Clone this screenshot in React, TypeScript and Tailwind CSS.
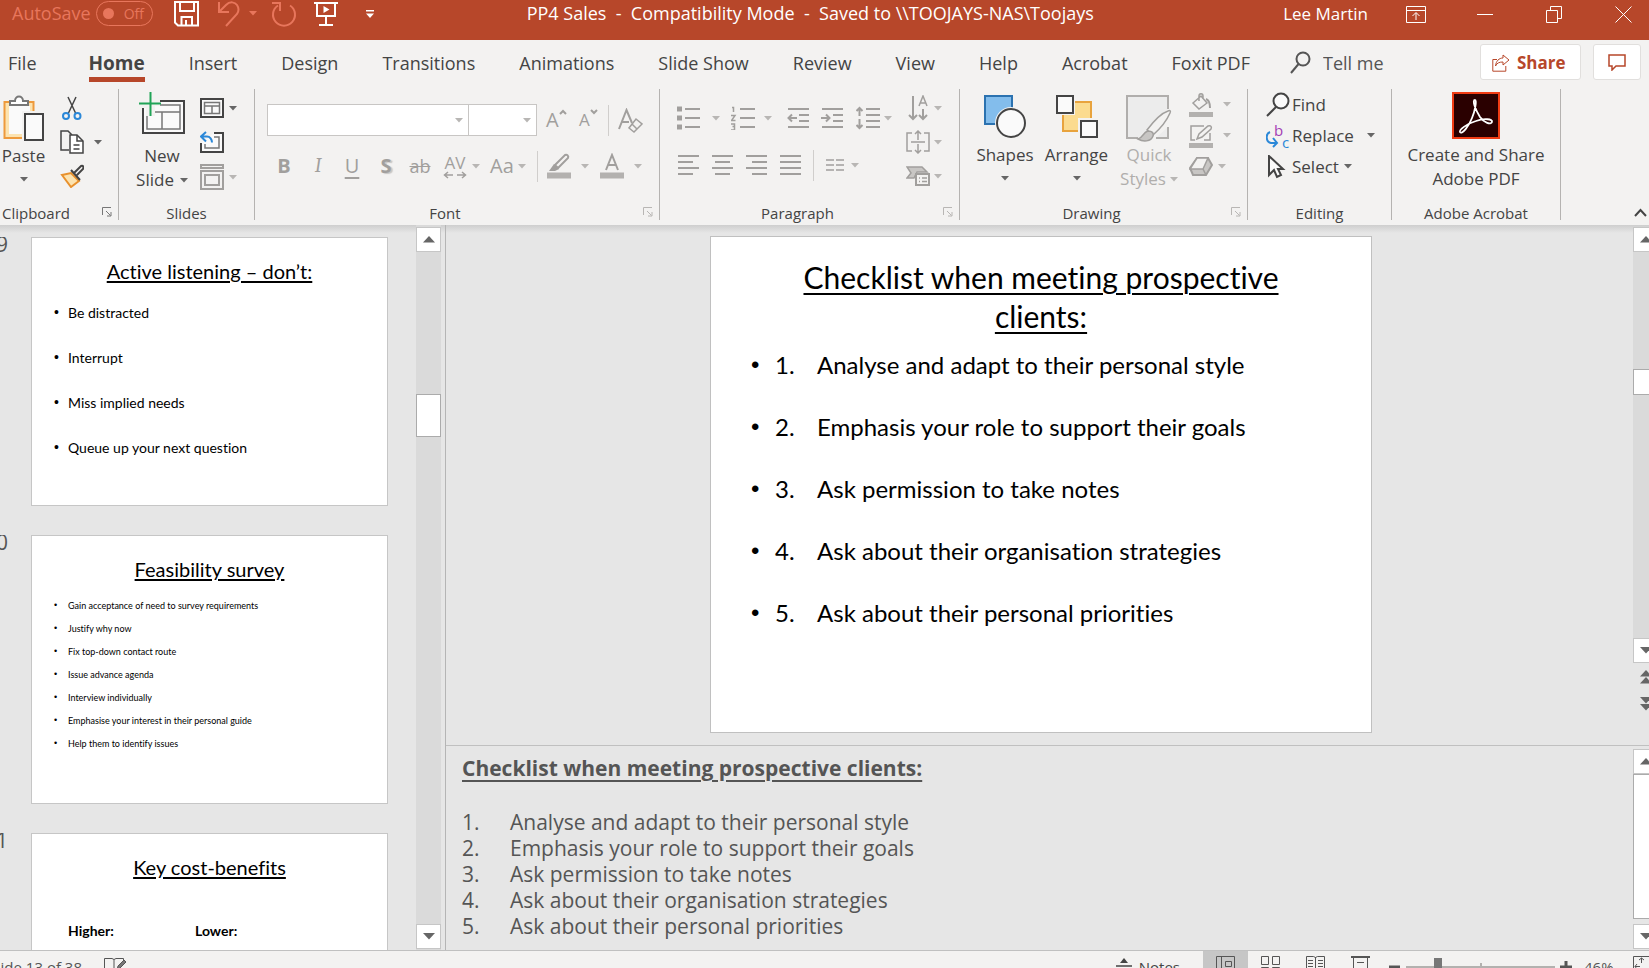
import { useState } from 'react';
import type { ReactNode } from 'react';

const TABS = [
  'File', 'Home', 'Insert', 'Design', 'Transitions', 'Animations',
  'Slide Show', 'Review', 'View', 'Help', 'Acrobat', 'Foxit PDF',
];

const CHECKLIST = [
  'Analyse and adapt to their personal style',
  'Emphasis your role to support their goals',
  'Ask permission to take notes',
  'Ask about their organisation strategies',
  'Ask about their personal priorities',
];

const LISTENING = ['Be distracted', 'Interrupt', 'Miss implied needs', 'Queue up your next question'];

const SURVEY = [
  'Gain acceptance of need to survey requirements',
  'Justify why now',
  'Fix top-down contact route',
  'Issue advance agenda',
  'Interview individually',
  'Emphasise your interest in their personal guide',
  'Help them to identify issues',
];

type IconProps = {
  w?: number;
  h?: number;
  sw?: number;
  className?: string;
  children: ReactNode;
};

// Plain stroke icon, drawn 1:1 in pixels
function Icon({ w = 24, h = 24, sw = 2, className = '', children }: IconProps) {
  return (
    <svg
      width={w}
      height={h}
      viewBox={`0 0 ${w} ${h}`}
      fill="none"
      stroke="currentColor"
      strokeWidth={sw}
      className={`shrink-0 ${className}`}
      aria-hidden="true"
    >
      {children}
    </svg>
  );
}

function Caret({ className = 'text-[#666]' }: { className?: string }) {
  return (
    <svg width="8" height="5" viewBox="0 0 8 5" className={`shrink-0 ${className}`} aria-hidden="true">
      <path d="M0 0h8L4 4.5z" fill="currentColor" />
    </svg>
  );
}

function Launcher({ className = 'text-[#777]' }: { className?: string }) {
  return (
    <button aria-label="More options" className={`mt-[5px] mr-[6px] ${className}`}>
      <Icon w={10} h={10} sw={1}>
        <path d="M.5 8V.5H9M4 4l4.500 4.500M9 5v4H5" />
      </Icon>
    </button>
  );
}

type GroupProps = {
  label: string;
  className: string;
  launcher?: ReactNode;
  children: ReactNode;
};

function Group({ label, className, launcher, children }: GroupProps) {
  return (
    <section aria-label={label} className={`flex h-[131px] shrink-0 flex-col border-r border-[#b5b3b1] ${className}`}>
      <div className="flex h-[113px] shrink-0 items-start">{children}</div>
      <div className="flex h-[22px] shrink-0 items-start">
        <div className="flex-1 text-center text-[15px] leading-[22px]">{label}</div>
        {launcher}
      </div>
    </section>
  );
}

function Divider() {
  return <div className="h-[31px] w-px shrink-0 bg-[#d0cecc]" />;
}

function TitleBar() {
  return (
    <header className="flex h-10 shrink-0 items-start bg-[#b7472a] text-white">
      <div className="flex h-[27px] shrink-0 items-center pl-3">
        <label htmlFor="autosave" className="text-[18px] text-[#e8765c]">AutoSave</label>
        <button
          id="autosave"
          role="switch"
          aria-checked="false"
          className="ml-[5px] flex h-[25px] w-[57px] items-center gap-[10px] rounded-full border border-[#e8765c] pl-[6px] text-[14px] text-[#e8765c]"
        >
          <span className="size-[11px] rounded-full bg-[#e8765c]" />
          Off
        </button>
        <button aria-label="Save" className="ml-[21px]">
          <Icon w={25} h={26}>
            <path d="M1 1h23v23.500H4L1 21.500zM6 1v9h14V1M7.500 24v-8H18v8M12 19v5" />
          </Icon>
        </button>
        <button aria-label="Undo" className="ml-[18px] text-[#e8765c]">
          <Icon w={24} h={26}>
            <path d="M2 1v10h10M2 11L9 4c4-4 9-3 11 0s2 6 0 9L9 25" />
          </Icon>
        </button>
        <Caret className="ml-[8px] text-[#e8765c]" />
        <button aria-label="Redo" className="ml-[14px] text-[#e8765c]">
          <Icon w={26} h={26}>
            <path d="M7 4.500A11 11 0 1 0 19 4.500M1 2h8v8" />
          </Icon>
        </button>
        <button aria-label="Start from beginning" className="ml-[17px]">
          <Icon w={24} h={26}>
            <path d="M0 2h24M3 2v13h18V2M12 15v8M5 24h14" />
            <path d="M9.500 5v7l6-3.500z" fill="currentColor" stroke="none" />
          </Icon>
        </button>
        <button aria-label="Customize quick access" className="ml-[28px]">
          <svg width="8" height="8" viewBox="0 0 8 8" aria-hidden="true">
            <path d="M0 0h8v1.500H0zM0 3.500h8L4 8z" fill="currentColor" />
          </svg>
        </button>
      </div>
      <div className="flex-1 whitespace-pre pl-[153px] text-[18px] leading-[26px]">
        {'PP4 Sales  -  Compatibility Mode  -  Saved to \\\\TOOJAYS-NAS\\Toojays'}
      </div>
      <div className="flex h-[28px] shrink-0 items-center pr-[17px]">
        <span className="text-[17px]">Lee Martin</span>
        <button aria-label="Ribbon display options" className="ml-[38px]">
          <Icon w={20} h={17} sw={1}>
            <path d="M.5 .5h19v16H.5zM.5 4.500h19M10 14V7M6.500 10L10 6.500 13.500 10" />
          </Icon>
        </button>
        <button aria-label="Minimize" className="ml-[51px]">
          <Icon w={16} h={16} sw={1}><path d="M0 8.500h16" /></Icon>
        </button>
        <button aria-label="Restore" className="ml-[53px]">
          <Icon w={16} h={17} sw={1}>
            <path d="M.5 4.500h11v12H.5zM4.500 4V.5h11v12H12" />
          </Icon>
        </button>
        <button aria-label="Close" className="ml-[53px]">
          <Icon w={17} h={17} sw={1}><path d="M.5 .5l16 16M16.500 .5l-16 16" /></Icon>
        </button>
      </div>
    </header>
  );
}

function TabRow() {
  const [active, setActive] = useState('Home');

  return (
    <nav className="flex h-[49px] shrink-0 items-start bg-[#f3f2f1] pr-[8px]">
      <div className="flex w-[1250px] shrink-0 justify-between pl-2 pt-[9px]">
        {TABS.map(tab => (
          <button
            key={tab}
            onClick={() => setActive(tab)}
            className={
              tab === active
                ? 'ml-2 h-[33px] border-b-[5px] border-[#b7472a] text-[19px] leading-[28px] font-bold'
                : 'h-[33px] border-b-[5px] border-transparent text-[18px] leading-[28px]'
            }
          >
            {tab}
          </button>
        ))}
      </div>
      <label className="ml-[40px] flex flex-1 items-center pt-[11px]">
        <Icon w={21} h={24} sw={2} className="text-[#555]">
          <circle cx="13" cy="8" r="6.500" />
          <path d="M8.500 13L1 22" />
        </Icon>
        <input
          aria-label="Tell me"
          placeholder="Tell me"
          className="ml-[12px] h-6 w-[100px] bg-transparent text-[18px] outline-none placeholder:text-[#555]"
        />
      </label>
      <button className="mt-1 flex h-9 w-[101px] items-center gap-[7px] rounded-[3px] border border-[#e1dfdd] bg-white pl-[11px] pt-[2px] text-[17px] font-bold text-[#b7472a]">
        <Icon w={18} h={18} sw={1}>
          <path d="M5 5.500H.8v11.700h13V12" />
          <path d="M11 1l6 5-6 5V8c-4 0-6 1-7.500 4C4 7 7 4 11 4z" />
        </Icon>
        Share
      </button>
      <button aria-label="Comments" className="ml-3 mt-1 flex h-9 w-[48px] items-center justify-center rounded-[3px] border border-[#e1dfdd] bg-white text-[#b7472a]">
        <Icon w={18} h={17}>
          <path d="M1 1h16v11H8l-4 4v-4H1z" strokeWidth="1.500" />
        </Icon>
      </button>
    </nav>
  );
}

function ClipboardGroup() {
  return (
    <Group label="Clipboard" className="w-[119px]" launcher={<div className="flex w-[46px] justify-end"><Launcher /></div>}>
      <button className="flex w-[47px] shrink-0 flex-col items-center pt-[6px] text-[17px] leading-6">
        <Icon w={42} h={46}>
          <rect x="1.500" y="7" width="29" height="36" fill="#fce3b0" stroke="#ee9a3c" />
          <rect x="6" y="11" width="21" height="28" fill="#fafafa" stroke="none" />
          <path d="M7 10V6h5c0-6 8-6 8 0h5v4z" fill="#fff" stroke="#777" />
          <rect x="19" y="16" width="23" height="30" fill="#f3f2f1" stroke="none" />
          <rect x="22" y="19" width="18" height="26" fill="#fafafa" stroke="#444" />
        </Icon>
        <span className="mt-[3px]">Paste</span>
        <Caret className="mt-[9px] text-[#666]" />
      </button>
      <div className="flex shrink-0 flex-col pl-[13px] pt-[2px]">
        <button aria-label="Cut" className="flex h-[34px] items-center">
          <Icon>
            <path d="M8 1l8 17M16 1L8 18" stroke="#444" strokeWidth="1.500" />
            <circle cx="6" cy="20" r="3" stroke="#2b88d8" />
            <circle cx="17.500" cy="20" r="3" stroke="#2b88d8" />
          </Icon>
        </button>
        <button aria-label="Copy" className="flex h-[34px] items-center gap-[10px]">
          <Icon>
            <path d="M9 20H1V1h7l4 4" stroke="#444" strokeWidth="1.500" />
            <path d="M10 5h7l6 6v12H10z" fill="#fff" stroke="#444" strokeWidth="1.500" />
            <path d="M17 5v6h6M13.500 15h6M13.500 19h6" stroke="#444" strokeWidth="1.500" />
          </Icon>
          <Caret />
        </button>
        <button aria-label="Format Painter" className="flex h-[34px] items-center">
          <Icon>
            <path d="M2 11l9-2 8 8-8 6z" fill="#fce3b0" stroke="#e8912d" />
            <path d="M11 6l9 10M14 9l7-7c2-1 3 1 2 3l-6 6" stroke="#444" />
          </Icon>
        </button>
      </div>
    </Group>
  );
}

function SlidesGroup() {
  return (
    <Group label="Slides" className="w-[136px]">
      <button className="flex w-[66px] shrink-0 flex-col items-center pt-[3px] pl-5 text-[17px] leading-6">
        <Icon w={46} h={42}>
          <rect x="4" y="9" width="41" height="32" fill="#fafafa" stroke="#444" />
          <rect x="8" y="13" width="33" height="24" stroke="#777" strokeWidth="1.500" />
          <path d="M8 20h33M23 20v17" stroke="#777" strokeWidth="1.500" />
          <path d="M0 6h21v8H16v10H7V16H0z" fill="#f3f2f1" stroke="none" />
          <path d="M0 11.500h22M11.500 0v24" stroke="#20a357" />
        </Icon>
        <span className="mt-[10px]">New</span>
        <span className="flex items-center gap-[6px]">
          Slide
          <Caret />
        </span>
      </button>
      <div className="flex flex-col pl-[15px] pt-[2px]">
        <button aria-label="Layout" className="flex h-[34px] items-center gap-[5px]">
          <Icon w={24} h={20}>
            <rect x="1" y="1" width="22" height="18" fill="#fafafa" stroke="#444" />
            <path d="M4.500 4.500h15v11h-15zM4.500 8h15M12 8v8" stroke="#777" strokeWidth="1.500" />
          </Icon>
          <Caret />
        </button>
        <button aria-label="Reset" className="flex h-[34px] items-center">
          <Icon w={24} h={22}>
            <path d="M14 2h9v19H1v-9" fill="#fafafa" stroke="#444" />
            <path d="M14 6h5v11H5v-4" stroke="#777" strokeWidth="1.500" />
            <path d="M6 1L1 5.500l5 5M1 5.500h6c3 0 5 3 5 6" stroke="#2b88d8" />
          </Icon>
        </button>
        <button aria-label="Section" className="flex h-[36px] items-center gap-[5px] text-[#a19f9d]">
          <Icon w={24} h={26}>
            <path d="M1 1h22v3H1zM1 7h22v18H1zM5 11h14v10H5z" />
          </Icon>
          <Caret className="text-[#b8b6b4]" />
        </button>
      </div>
    </Group>
  );
}

function FontGroup() {
  return (
    <Group label="Font" className="w-[405px]" launcher={<Launcher className="ml-2 text-[#b8b6b4]" />}>
      <div className="flex flex-col pl-[12px] pt-[15px] text-[#a19f9d]">
        <div className="flex h-8 items-center">
          <div className="flex h-8 w-[202px] items-center border border-[#c8c6c4] bg-white pr-[5px]">
            <select aria-label="Font" disabled className="h-full flex-1 appearance-none bg-transparent"><option /></select>
            <Caret className="text-[#b8b6b4]" />
          </div>
          <div className="-ml-px flex h-8 w-[69px] items-center border border-[#c8c6c4] bg-white pr-[5px]">
            <select aria-label="Font size" disabled className="h-full flex-1 appearance-none bg-transparent"><option /></select>
            <Caret className="text-[#b8b6b4]" />
          </div>
          <button aria-label="Increase font size" className="ml-[9px] flex w-[33px] items-start">
            <span className="text-[20px] leading-6">A</span>
            <Icon w={8} h={8} sw={2}><path d="M1 6l3-3 3 3" /></Icon>
          </button>
          <button aria-label="Decrease font size" className="flex w-[29px] items-start">
            <span className="text-[17px] leading-6">A</span>
            <Icon w={8} h={8} sw={2}><path d="M1 2l3 3 3-3" /></Icon>
          </button>
          <Divider />
          <button aria-label="Clear formatting" className="ml-[9px]">
            <Icon w={25} h={25}>
              <path d="M1 21L8.500 2 14 15M4 14h7" />
              <path d="M18 11l6 5-8 8-5-4z" strokeWidth="1.500" />
              <path d="M14 16l5 5" strokeWidth="1.500" />
            </Icon>
          </button>
        </div>
        <div className="mt-[14px] flex h-8 items-center text-[20px]">
          <button className="w-[34px] font-bold">B</button>
          <button className="w-[34px] font-serif italic">I</button>
          <button className="w-[34px] underline underline-offset-4">U</button>
          <button className="w-[34px] font-bold text-shadow-[2px_1px_1px_#c8c6c4]">S</button>
          <button className="w-[34px] text-[18px] line-through">ab</button>
          <button aria-label="Character spacing" className="flex w-[49px] items-center gap-[5px] pl-[6px]">
            <span className="flex flex-col items-center">
              <span className="text-[17px] leading-[17px]">AV</span>
              <Icon w={24} h={8} sw={2}><path d="M10 4H1M5 1L1.500 4 5 7M14 4h9M19 1l3.500 3L19 7" strokeWidth="1.500" /></Icon>
            </span>
            <Caret className="text-[#b8b6b4]" />
          </button>
          <button aria-label="Change case" className="flex w-[51px] items-center gap-[4px] pl-1">
            Aa
            <Caret className="text-[#b8b6b4]" />
          </button>
          <Divider />
          <button aria-label="Highlight" className="ml-[9px] flex items-center gap-[10px]">
            <Icon w={24} h={26}>
              <path d="M8 12L18 2c2-1 4 1 3 3L11 15z" />
              <path d="M7 11l5 5-4 2H2z" fill="currentColor" stroke="none" />
              <path d="M0 22.500h24" strokeWidth="6" stroke="#b3b1af" />
            </Icon>
            <Caret className="text-[#b8b6b4]" />
          </button>
          <button aria-label="Font color" className="ml-[11px] flex items-center gap-[10px]">
            <Icon w={24} h={26}>
              <path d="M6 17l6-15 6 15M8 12h8" />
              <path d="M0 22.500h24" strokeWidth="6" stroke="#b3b1af" />
            </Icon>
            <Caret className="text-[#b8b6b4]" />
          </button>
        </div>
      </div>
    </Group>
  );
}

function ParagraphGroup() {
  return (
    <Group label="Paragraph" className="w-[300px]" launcher={<Launcher className="ml-2 text-[#b8b6b4]" />}>
      <div className="flex w-[246px] shrink-0 flex-col pl-[17px] pt-[13px] text-[#a19f9d]">
        <div className="flex h-8 items-center">
          <button aria-label="Bullets" className="flex items-center gap-[11px]">
            <Icon>
              <path d="M8 3h15M8 12h15M8 21h15" />
              <path d="M0 3h5M0 12h5M0 21h5" strokeWidth="5" />
            </Icon>
            <Caret className="text-[#b8b6b4]" />
          </button>
          <button aria-label="Numbering" className="ml-[11px] flex items-center gap-[9px]">
            <Icon>
              <path d="M9 3h15M9 12h15M9 21h15" />
              <path d="M1 1.500h1.500V6M0 9.500h4L.5 14.500H4.500M0 18h3.500v2.500H1.500M3.500 20.500V24H0" strokeWidth="1.500" />
            </Icon>
            <Caret className="text-[#b8b6b4]" />
          </button>
          <button aria-label="Decrease indent" className="ml-[15px]">
            <Icon w={22} h={22}>
              <path d="M1 2h21M12 8h10M12 14h10M1 20h21" />
              <path d="M10 11H1.500M5 7.500L1.500 11 5 14.500" />
            </Icon>
          </button>
          <button aria-label="Increase indent" className="ml-[12px]">
            <Icon w={22} h={22}>
              <path d="M1 2h21M12 8h10M12 14h10M1 20h21" />
              <path d="M0 11h8.500M5 7.500L8.500 11 5 14.500" />
            </Icon>
          </button>
          <button aria-label="Line spacing" className="ml-[13px] flex items-center gap-[4px]">
            <Icon>
              <path d="M10 3h14M10 9h14M10 15h14M10 21h14" />
              <path d="M3.500 10V2M.5 5l3-3 3 3M3.500 13v9M.5 19l3 3 3-3" />
            </Icon>
            <Caret className="text-[#b8b6b4]" />
          </button>
        </div>
        <div className="mt-[15px] flex h-8 items-center gap-[12px]">
          <button aria-label="Align left"><Icon w={22} h={20}><path d="M1 1h21M1 7h15M1 13h21M1 19h15" /></Icon></button>
          <button aria-label="Center"><Icon w={22} h={20}><path d="M1 1h21M4 7h15M1 13h21M4 19h15" /></Icon></button>
          <button aria-label="Align right"><Icon w={22} h={20}><path d="M1 1h21M7 7h15M1 13h21M7 19h15" /></Icon></button>
          <button aria-label="Justify"><Icon w={22} h={20}><path d="M1 1h21M1 7h21M1 13h21M1 19h21" /></Icon></button>
          <Divider />
          <button aria-label="Columns" className="flex items-center gap-[7px]">
            <Icon w={18} h={14}><path d="M0 2h8M0 7h8M0 12h8M10 2h8M10 7h8M10 12h8" strokeWidth="1.500" /></Icon>
            <Caret className="text-[#b8b6b4]" />
          </button>
        </div>
      </div>
      <div className="flex flex-col pt-[2px] text-[#a19f9d]">
        <button aria-label="Text direction" className="flex h-[34px] items-center gap-[4px]">
          <Icon w={24} h={26}>
            <path d="M7 1v23M3 20l4 4 4-4M17 14v10M13 20l4 4 4-4" />
            <path d="M13 11l4-10 4 10M14.500 8h5" strokeWidth="1.500" />
          </Icon>
          <Caret className="text-[#b8b6b4]" />
        </button>
        <button aria-label="Align text" className="flex h-[34px] items-center gap-[4px]">
          <Icon>
            <path d="M6 3H1v18h5M18 3h5v18h-5M5 12h14M12 10V1M9 4l3-3 3 3M12 14v9M9 20l3 3 3-3" strokeWidth="1.500" />
          </Icon>
          <Caret className="text-[#b8b6b4]" />
        </button>
        <button aria-label="Convert to SmartArt" className="flex h-[34px] items-center gap-[4px]">
          <Icon w={24} h={20}>
            <path d="M1 1h15l5 5H11l-3 6H1l4-5z" fill="#c8c6c4" strokeWidth="1.500" />
            <path d="M10 8h13v11H10z" fill="#f3f2f1" />
            <path d="M13 12h1M16 12h5M13 15.500h1M16 15.500h5" strokeWidth="1.500" />
          </Icon>
          <Caret className="text-[#b8b6b4]" />
        </button>
      </div>
    </Group>
  );
}

function DrawingGroup() {
  return (
    <Group label="Drawing" className="w-[288px]" launcher={<Launcher className="ml-2 text-[#b8b6b4]" />}>
      <button className="ml-[9px] flex w-[72px] shrink-0 flex-col items-center pt-[6px] text-[17px] leading-6">
        <Icon w={42} h={43}>
          <rect x="1" y="1" width="27" height="28" fill="#83bdec" stroke="#2b72b0" />
          <circle cx="27" cy="28" r="16" fill="#f3f2f1" stroke="none" />
          <circle cx="27" cy="28" r="14" fill="#fafafa" stroke="#444" />
        </Icon>
        <span className="mt-[5px]">Shapes</span>
        <Caret className="mt-[9px] text-[#666]" />
      </button>
      <button className="flex w-[71px] shrink-0 flex-col items-center pt-[6px] text-[17px] leading-6">
        <Icon w={42} h={43}>
          <rect x="7" y="7" width="28" height="29" fill="#fbdb8f" stroke="#e8a33d" />
          <rect x="0" y="0" width="19" height="20" fill="#f3f2f1" stroke="none" />
          <rect x="1" y="1" width="16" height="17" fill="#fafafa" stroke="#444" />
          <rect x="22" y="23" width="20" height="20" fill="#f3f2f1" stroke="none" />
          <rect x="25" y="26" width="16" height="16" fill="#fafafa" stroke="#444" />
        </Icon>
        <span className="mt-[5px]">Arrange</span>
        <Caret className="mt-[9px] text-[#666]" />
      </button>
      <button className="flex w-[74px] shrink-0 flex-col items-center pt-[6px] text-[17px] leading-6 text-[#b0aeac]">
        <Icon w={46} h={47}>
          <path d="M12 43H1V1h41v13M42 32v11H30" fill="#ececec" />
          <path d="M21 35C27 27 36 18 42 16c2-1 3 0 2 2-3 7-9 15-17 22z" fill="#f3f2f1" strokeWidth="1.500" stroke="#a19f9d" />
          <path d="M12 44c5-1 5-7 10-8 4 0 6 2 5 5-2 6-10 6-15 3z" fill="#c8c6c4" strokeWidth="1.500" stroke="#a19f9d" />
        </Icon>
        <span className="mt-px">Quick</span>
        <span className="flex items-center gap-[4px]">
          Styles
          <Caret className="text-[#b8b6b4]" />
        </span>
      </button>
      <div className="flex flex-col pl-[3px] text-[#a19f9d]">
        <button aria-label="Shape fill" className="flex h-[31px] items-center gap-[10px]">
          <Icon>
            <path d="M4 10l8-7 6 7-8 6zM10 8V3c0-3 4-3 4 0v3" strokeWidth="1.500" />
            <path d="M17 6c3 1 4 4 4 9" />
            <path d="M0 21.500h24" strokeWidth="5" stroke="#b3b1af" />
          </Icon>
          <Caret className="text-[#b8b6b4]" />
        </button>
        <button aria-label="Shape outline" className="flex h-[31px] items-center gap-[10px]">
          <Icon>
            <path d="M15 2H2v14h4M21 9v7h-6" strokeWidth="1.500" />
            <path d="M8 15l2-5 9-8c3-1 4 1 3 3l-9 8z" strokeWidth="1.500" />
            <path d="M0 21.500h24" strokeWidth="5" stroke="#b3b1af" />
          </Icon>
          <Caret className="text-[#b8b6b4]" />
        </button>
        <button aria-label="Shape effects" className="flex h-[31px] items-center gap-[5px]">
          <Icon w={24} h={20}>
            <path d="M8 1h11l4 7-6 10H4L1 11z" fill="#c8c6c4" />
            <path d="M8 1h11l-5 11H1z" fill="#f3f2f1" strokeWidth="1.500" />
            <path d="M14 12l3 6" strokeWidth="1.500" />
          </Icon>
          <Caret className="text-[#b8b6b4]" />
        </button>
      </div>
    </Group>
  );
}

function EditingGroup() {
  return (
    <Group label="Editing" className="w-[144px]">
      <div className="flex flex-col pl-[18px] text-[17px]">
        <button className="flex h-[31px] items-center gap-[2px]">
          <Icon w={24} h={25} sw={2}>
            <circle cx="15" cy="9" r="7.500" fill="#fafafa" />
            <path d="M10 15L1 24" />
          </Icon>
          Find
        </button>
        <button className="flex h-[31px] items-center gap-[2px]">
          <span className="relative h-6 w-6 text-[15px] leading-3">
            <Icon className="text-[#2b88d8]"><path d="M4 8c-5 2-4 10 1 11h6M7 14l4 5-4 4" /></Icon>
            <span className="absolute top-0 left-2 text-[#a33eb5]">b</span>
            <span className="absolute top-3 left-4 text-[#2b88d8]">c</span>
          </span>
          Replace
          <Caret className="ml-[11px] text-[#666]" />
        </button>
        <button className="flex h-[31px] items-center gap-[2px]">
          <Icon>
            <path d="M3 1v19l5-5 3 7 4-2-3-6h5z" fill="#fafafa" />
          </Icon>
          Select
          <Caret className="ml-[3px] text-[#666]" />
        </button>
      </div>
    </Group>
  );
}

function AcrobatGroup() {
  return (
    <Group label="Adobe Acrobat" className="w-[169px]">
      <button className="flex w-full flex-col items-center pt-[3px] text-[17px] leading-6">
        <Icon w={48} h={47}>
          <rect x="1" y="1" width="46" height="45" fill="#2a0000" stroke="#f03c14" />
          <path
            d="M23 8c-3 0 0 9 5 17 4 6 11 8 12 5s-8-4-16-1C14 32 7 38 8 40c2 3 9-6 12-14 3-7 5-18 3-18z"
            stroke="#fff"
            strokeWidth="1.800"
          />
        </Icon>
        <span className="mt-[4px]">Create and Share</span>
        <span>Adobe PDF</span>
      </button>
    </Group>
  );
}

function Ribbon() {
  return (
    <div className="flex h-[136px] shrink-0 items-start bg-[#f3f2f1]">
      <ClipboardGroup />
      <SlidesGroup />
      <FontGroup />
      <ParagraphGroup />
      <DrawingGroup />
      <EditingGroup />
      <AcrobatGroup />
      <div className="flex h-[131px] flex-1 items-end justify-end pb-[3px] pr-[2px]">
        <button aria-label="Collapse the ribbon">
          <Icon w={13} h={9} sw={2}><path d="M1 8l5.500-6L12 8" /></Icon>
        </button>
      </div>
    </div>
  );
}

function Arrow({ down = false }: { down?: boolean }) {
  return (
    <svg width="12" height="7" viewBox="0 0 12 7" aria-hidden="true">
      <path d={down ? 'M0 0h12L6 6.500z' : 'M0 6.500h12L6 0z'} fill="#666" />
    </svg>
  );
}

function ScrollButton({ down = false }: { down?: boolean }) {
  return (
    <button
      aria-label={down ? 'Scroll down' : 'Scroll up'}
      className="flex h-[25px] w-[25px] shrink-0 items-center justify-center border border-[#c6c6c6] bg-white"
    >
      <Arrow down={down} />
    </button>
  );
}

function Bullet({ className }: { className: string }) {
  return <span className={`shrink-0 font-['Liberation_Sans'] ${className}`}>•</span>;
}

function Thumbnail({ num, title, children }: { num: string; title: string; children: ReactNode }) {
  return (
    <div className="flex h-[269px] shrink-0 gap-[23px]">
      <div className="flex w-2 justify-end overflow-hidden text-[21px] leading-[14px] text-[#555]">{num}</div>
      <div className="w-[357px] border border-[#c6c6c6] bg-white px-[22px] pt-[18px] font-[Lato] text-black [font-variant-ligatures:none]">
        <h2 className="text-center text-[20px] leading-[30px] underline underline-offset-2">{title}</h2>
        {children}
      </div>
    </div>
  );
}

function SlideList() {
  return (
    <aside className="flex w-[446px] shrink-0 border-r border-[#b5b5b5]">
      <div className="flex min-h-0 flex-1 flex-col gap-[29px] overflow-hidden pt-[12px]">
        <Thumbnail num="19" title="Active listening – don’t:">
          <ul className="mt-[4px] text-[14px] leading-[45px]">
            {LISTENING.map(item => (
              <li key={item} className="flex h-[45px]">
                <Bullet className="w-[14px]" />
                {item}
              </li>
            ))}
          </ul>
        </Thumbnail>
        <Thumbnail num="20" title="Feasibility survey">
          <ul className="mt-[10px] text-[9px] leading-[23px]">
            {SURVEY.map(item => (
              <li key={item} className="flex h-[23px]">
                <Bullet className="w-[14px]" />
                {item}
              </li>
            ))}
          </ul>
        </Thumbnail>
        <Thumbnail num="21" title="Key cost-benefits">
          <div className="mt-[37px] flex pl-[14px] text-[14px] leading-[24px] font-bold">
            <span className="w-[127px]">Higher:</span>
            <span>Lower:</span>
          </div>
        </Thumbnail>
      </div>
      <div className="mr-1 flex w-[25px] flex-col bg-[#dadada] pt-[2px] pb-px">
        <ScrollButton />
        <div className="flex-1 pt-[142px]">
          <div className="h-[43px] border border-[#ababab] bg-white" />
        </div>
        <ScrollButton down />
      </div>
    </aside>
  );
}

function SlideEditor() {
  return (
    <div className="flex h-[521px] shrink-0 border-b border-[#c0c0c0]">
      <div className="flex flex-1 justify-center pt-[11px] pl-[3px]">
        <article className="h-[497px] w-[662px] border border-[#c0c0c0] bg-white pt-[21px] font-[Lato] text-black [font-variant-ligatures:none]">
          <h1 className="mx-auto w-[500px] text-center text-[30px] leading-[39px] underline decoration-2 underline-offset-4">
            Checklist when meeting prospective clients:
          </h1>
          <ul className="-mt-[2px] pl-[40px] text-[24px] leading-[62px]">
            {CHECKLIST.map((item, i) => (
              <li key={item} className="flex h-[62px]">
                <Bullet className="w-[24px]" />
                <span className="w-[42px]">{i + 1}.</span>
                {item}
              </li>
            ))}
          </ul>
        </article>
      </div>
      <div className="w-4 overflow-hidden">
        <div className="flex h-full w-[25px] flex-col pt-[2px]">
          <ScrollButton />
          <div className="h-[386px] bg-[#dadada] pt-[117px]">
            <div className="h-[26px] border border-[#ababab] bg-white" />
          </div>
          <ScrollButton down />
          <button aria-label="Previous slide" className="flex h-7 flex-col items-center justify-center"><Arrow /><Arrow /></button>
          <button aria-label="Next slide" className="flex h-[26px] flex-col items-center justify-center"><Arrow down /><Arrow down /></button>
        </div>
      </div>
    </div>
  );
}

function NotesPane() {
  return (
    <div className="flex min-h-0 flex-1">
      <div className="flex-1 overflow-hidden pl-4 pt-[9px] text-[21px] leading-[27px] text-[#555]">
        <h3 className="font-bold underline underline-offset-4">Checklist when meeting prospective clients:</h3>
        <ol className="pt-[27px]">
          {CHECKLIST.map((item, i) => (
            <li key={item} className="flex h-[26px]">
              <span className="w-12">{i + 1}.</span>
              {item}
            </li>
          ))}
        </ol>
      </div>
      <div className="w-4 overflow-hidden">
        <div className="flex h-full w-[25px] flex-col justify-between pt-[3px] pb-px">
          <ScrollButton />
          <div className="mb-[5px] flex-1 border border-[#ababab] bg-white" />
          <ScrollButton down />
        </div>
      </div>
    </div>
  );
}

function StatusBar() {
  const [zoom, setZoom] = useState(20);

  return (
    <footer className="h-[18px] shrink-0 overflow-hidden border-t border-[#c0c0c0] bg-[#f3f2f1] text-[15px] text-[#555]">
      <div className="flex h-8 items-center">
        <div className="flex w-[82px] justify-end whitespace-nowrap">Slide 13 of 38</div>
        <button aria-label="Spelling" className="ml-[22px]">
          <Icon w={22} h={22} sw={1}>
            <path d="M10 18.500V3.500L8 2.500H.5v16h9M10 3.500l2-1h7.500V6M10 18.500h9.500V14" />
            <path d="M13 14l1-4 6-6 2 2-6 6z" fill="#777" />
          </Icon>
        </button>
        <div className="flex-1" />
        <button className="flex items-center gap-[7px] pr-[23px] text-[#444]">
          <Icon w={16} h={18} sw={2}>
            <path d="M0 8h16M0 13h16" strokeWidth="1.500" />
            <path d="M4 5l4-5 4 5z" fill="currentColor" stroke="none" />
          </Icon>
          Notes
        </button>
        <button aria-label="Normal" className="flex h-8 w-[45px] items-center justify-center bg-[#c6c6c6]">
          <Icon w={19} h={24} sw={1}><path d="M.5 1.500h18v19H.5zM5.500 1.500v19M9.500 6.500h6v5h-6z" /></Icon>
        </button>
        <button aria-label="Slide sorter" className="flex w-[45px] justify-center">
          <Icon w={19} h={24} sw={1}><path d="M.5 1.500h7v8h-7zM11.500 1.500h7v8h-7zM.5 12.500h7v8h-7zM11.500 12.500h7v8h-7z" /></Icon>
        </button>
        <button aria-label="Reading view" className="flex w-[45px] justify-center">
          <Icon w={19} h={24} sw={1}><path d="M.5 1.500h7l2 1 2-1h7v17h-7l-2 1-2-1h-7zM9.500 2v18M2 5.500h5M2 8.500h5M2 11.500h5M12 5.500h5M12 8.500h5M12 11.500h5" /></Icon>
        </button>
        <button aria-label="Slide show" className="flex w-[45px] justify-center">
          <Icon w={19} h={24} sw={1}><path d="M0 2h19" strokeWidth="2" /><path d="M2.500 2v11.500h14V2M6 7.500h7" /></Icon>
        </button>
        <button aria-label="Zoom out" className="ml-[6px]">
          <Icon w={11} h={12} sw={3}><path d="M0 6h11" /></Icon>
        </button>
        <input
          type="range"
          aria-label="Zoom"
          value={zoom}
          onChange={e => setZoom(Number(e.target.value))}
          className="ml-[6px] h-5 w-[149px] appearance-none bg-[linear-gradient(#b3b1af,#b3b1af),linear-gradient(#b3b1af,#b3b1af)] bg-[length:100%_2px,2px_8px] bg-center bg-no-repeat [&::-webkit-slider-thumb]:h-[18px] [&::-webkit-slider-thumb]:w-2 [&::-webkit-slider-thumb]:appearance-none [&::-webkit-slider-thumb]:bg-[#777]"
        />
        <button aria-label="Zoom in" className="ml-[5px]">
          <Icon w={12} h={12} sw={3}><path d="M0 6h12M6 0v12" /></Icon>
        </button>
        <span className="ml-[12px] w-[49px]">46%</span>
        <button aria-label="Fit to window" className="w-4 overflow-hidden">
          <Icon w={22} h={24} sw={1}><path d="M.5 1.500h21v19H.5zM8.500 3v5M6 5l2.500-2L11 5M2 11.500h5M4 9l-2 2.500L4 14" /></Icon>
        </button>
      </div>
    </footer>
  );
}

export default function App() {
  return (
    <div className="flex h-screen flex-col overflow-hidden bg-[#e6e6e6] font-['Open_Sans',sans-serif] text-[#444]">
      <TitleBar />
      <TabRow />
      <Ribbon />
      <main className="flex min-h-0 flex-1 bg-[linear-gradient(#cecece,#e6e6e6_8px)]">
        <SlideList />
        <div className="flex min-w-0 flex-1 flex-col">
          <SlideEditor />
          <NotesPane />
        </div>
      </main>
      <StatusBar />
    </div>
  );
}
